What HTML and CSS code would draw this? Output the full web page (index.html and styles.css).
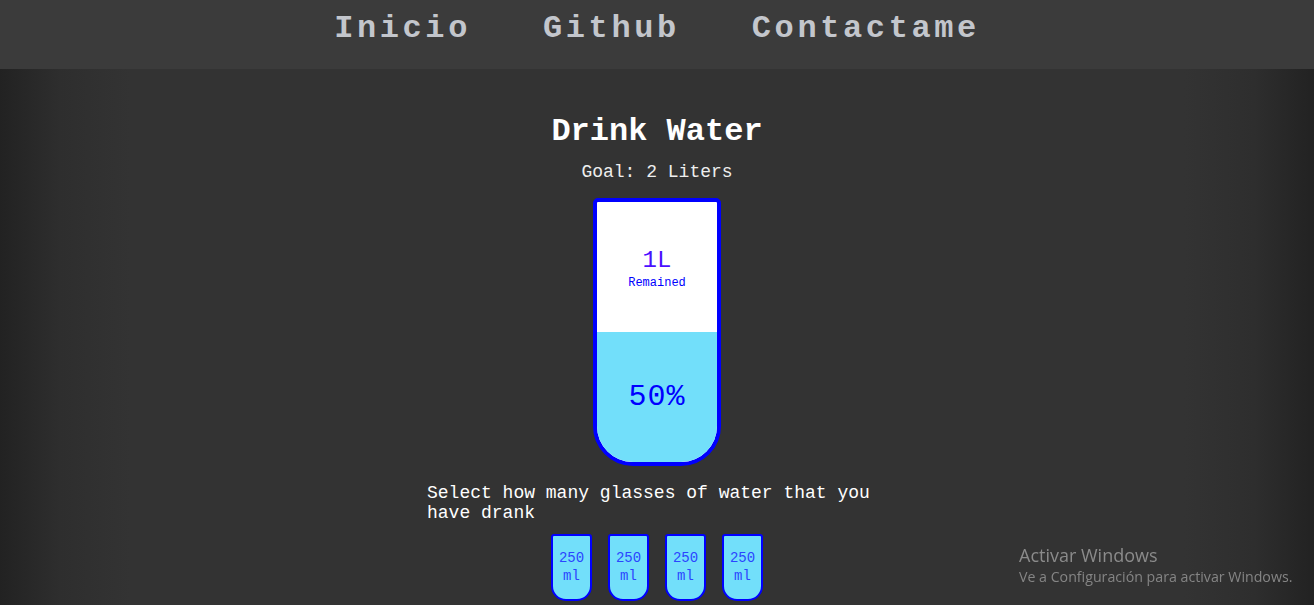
FILE: index.html
```html
<!DOCTYPE html>
<html lang="es">
<head>
<meta charset="utf-8">
<title>Drink Water</title>
<link rel="stylesheet" href="styles.css">
</head>
<body>
<header class="topbar">
  <nav class="nav">
    <a class="nav-link" href="#">Inicio</a>
    <a class="nav-link" href="#">Github</a>
    <a class="nav-link" href="#">Contactame</a>
  </nav>
</header>
<main class="main">
  <h1 class="title">Drink Water</h1>
  <h3 class="goal">Goal: 2 Liters</h3>
  <div class="cup">
    <div class="remained">
      <span class="liters">1L</span>
      <small class="remained-label">Remained</small>
    </div>
    <div class="percentage">50%</div>
  </div>
  <p class="text">Select how many glasses of water that you have drank</p>
  <div class="cups">
    <div class="cup-small">250 ml</div>
    <div class="cup-small">250 ml</div>
    <div class="cup-small">250 ml</div>
    <div class="cup-small">250 ml</div>
  </div>
</main>
<div class="watermark">
  <div class="wm-title">Activar Windows</div>
  <div class="wm-sub">Ve a Configuración para activar Windows.</div>
</div>
</body>
</html>
```
FILE: styles.css
```css
* { box-sizing: border-box; }
html, body { height: 100%; }
body {
  margin: 0;
  font-family: "Liberation Mono", "Courier New", monospace;
  color: #fff;
  background: linear-gradient(to right, #222 0, #2e2e2e 60px, #333 130px, #333 calc(100% - 130px), #2e2e2e calc(100% - 60px), #222 100%);
  overflow: hidden;
}
.topbar {
  height: 69px;
  background: #3b3b3b;
  padding-top: 11px;
}
.nav {
  display: flex;
  justify-content: center;
  gap: 72px;
}
.nav-link {
  color: #c3c6cc;
  text-decoration: none;
  font-weight: bold;
  font-size: 32px;
  line-height: 36px;
  letter-spacing: 3.6px;
}
.main {
  display: flex;
  flex-direction: column;
  align-items: center;
}
.title {
  margin: 45px 0 0;
  font-size: 32px;
  line-height: 36px;
  font-weight: bold;
}
.goal {
  margin: 12px 0 0;
  font-size: 18px;
  line-height: 20px;
  font-weight: normal;
  color: #eee;
}
.cup {
  margin-top: 16px;
  width: 128px;
  height: 268px;
  border: 4px solid #0000ff;
  border-radius: 5px 5px 40px 40px;
  background: #fff;
  display: flex;
  flex-direction: column;
  overflow: hidden;
  color: #0000ff;
}
.remained {
  flex: 1;
  display: flex;
  flex-direction: column;
  align-items: center;
  justify-content: center;
  padding-top: 4px;
}
.liters {
  font-size: 24px;
  line-height: 26px;
  color: #4a10ff;
}
.remained-label {
  font-size: 12px;
  line-height: 16px;
  margin-top: 1px;
}
.percentage {
  height: 130px;
  background: #72dffa;
  display: flex;
  align-items: center;
  justify-content: center;
  font-size: 30px;
  letter-spacing: 1px;
  color: #0000ff;
}
.text {
  margin: 17px 0 0;
  width: 460px;
  font-size: 18px;
  line-height: 20px;
  color: #fff;
}
.cups {
  margin-top: 11px;
  display: flex;
  gap: 16px;
}
.cup-small {
  width: 41px;
  height: 67px;
  border: 2px solid #0000ff;
  border-radius: 3px 3px 15px 15px;
  background: #72dffa;
  color: #2b45ff;
  font-size: 14px;
  line-height: 18px;
  display: flex;
  align-items: center;
  justify-content: center;
  text-align: center;
  padding: 0 3px 2px;
}
.watermark {
  position: fixed;
  left: 1019px;
  top: 543px;
  font-family: "Open Sans", "Noto Sans", sans-serif;
  color: #8b8b8b;
}
.wm-title {
  font-size: 18px;
  line-height: 24px;
}
.wm-sub {
  font-size: 14.2px;
  line-height: 20px;
  color: #858585;
}
```
